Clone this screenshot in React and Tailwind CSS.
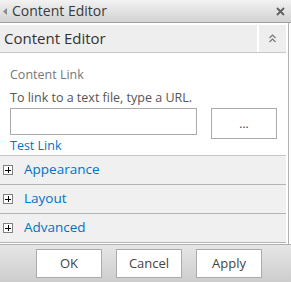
import React from 'react';

const dots = {
    backgroundImage: 'radial-gradient(#e4e4e4 0.6px, transparent 0.7px)',
    backgroundSize: '4px 4px',
};

function PlusBox() {
    return (
        <span className="w-[10px] h-[10px] border border-[#808080] bg-white flex items-center justify-center shrink-0">
            <svg width="8" height="8" viewBox="0 0 8 8">
                <path d="M1 4h6M4 1v6" stroke="#000" strokeWidth="1" shapeRendering="crispEdges" />
            </svg>
        </span>
    );
}

function Section({ label }) {
    return (
        <div className="h-[29px] bg-[#f0f0f0] border-b border-[#b4b4b4] flex items-center pl-[3px] mr-[2px]">
            <PlusBox />
            <span className="ml-[11px] text-[13.5px] text-[#0072c6] leading-none">{label}</span>
        </div>
    );
}

function FooterButton({ children }) {
    return (
        <button
            className="w-[66px] h-[29px] border border-[#ababab] bg-white text-[13px] text-[#444] flex items-center justify-center"
            style={dots}
        >
            {children}
        </button>
    );
}

export default function App() {
    return (
        <div className="w-[291px] h-[282px] bg-white flex flex-col overflow-hidden" style={{ fontFamily: '"Open Sans", "Noto Sans", sans-serif' }}>
            {/* title bar */}
            <div className="h-[23px] shrink-0 bg-gradient-to-b from-[#f2f2f2] to-[#d3d3d3] border-b border-[#a0a0a0] flex items-center">
                <svg width="4" height="7" viewBox="0 0 4 7" className="ml-[3px]">
                    <path d="M4 0L0 3.5L4 7z" fill="#8a8a8a" />
                </svg>
                <span className="ml-[5px] text-[14px] text-[#3a3a3a] leading-none">Content Editor</span>
                <svg width="9" height="9" viewBox="0 0 9 9" className="ml-auto mr-[6px]">
                    <path d="M1 1l7 7M8 1l-7 7" stroke="#606060" strokeWidth="1.8" />
                </svg>
            </div>

            <div className="flex-1 flex flex-col w-[289px] border-r border-[#b0b0b0]">
                {/* web part header */}
                <div className="mt-[2px] mr-[2px] h-[28px] flex border-b border-[#c8c8c8]">
                    <div className="flex-1 bg-[#eeeeee] flex items-center pl-[4px]">
                        <span className="text-[15px] text-[#333] leading-none">Content Editor</span>
                    </div>
                    <div className="w-[2px] bg-white" />
                    <div className="w-[27px] bg-[#eeeeee] flex items-center justify-center">
                        <svg width="7" height="9" viewBox="0 0 7 9">
                            <path d="M0.5 4L3.5 1L6.5 4M0.5 8L3.5 5L6.5 8" fill="none" stroke="#777" strokeWidth="1.2" />
                        </svg>
                    </div>
                </div>

                {/* content link */}
                <div className="pl-[10px] pt-[14px] h-[103px] mr-[2px] border-b border-[#c6c6c6]">
                    <div className="text-[12.5px] text-[#777] leading-[16px]">Content Link</div>
                    <div className="mt-[7px] text-[12.5px] text-[#555] leading-[16px]">To link to a text file, type a URL.</div>
                    <div className="mt-[2px] flex items-start">
                        <div className="w-[187px] h-[27px] border border-[#ababab] bg-white" />
                        <button
                            className="ml-[14px] w-[66px] h-[31px] border border-[#ababab] bg-white text-[12px] text-[#444] flex items-center justify-center"
                            style={dots}
                        >
                            ...
                        </button>
                    </div>
                    <div className="-mt-[1px] text-[12.5px] text-[#0072c6] leading-[16px]">Test Link</div>
                </div>

                <Section label="Appearance" />
                <Section label="Layout" />
                <Section label="Advanced" />
            </div>

            {/* footer */}
            <div className="h-[38px] shrink-0 bg-gradient-to-b from-[#e6e6e6] to-[#cdcdcd] border-t border-[#b0b0b0] flex items-start pt-[4px] pl-[36px] gap-[14px]">
                <FooterButton>OK</FooterButton>
                <FooterButton>Cancel</FooterButton>
                <FooterButton>Apply</FooterButton>
            </div>
        </div>
    );
}
